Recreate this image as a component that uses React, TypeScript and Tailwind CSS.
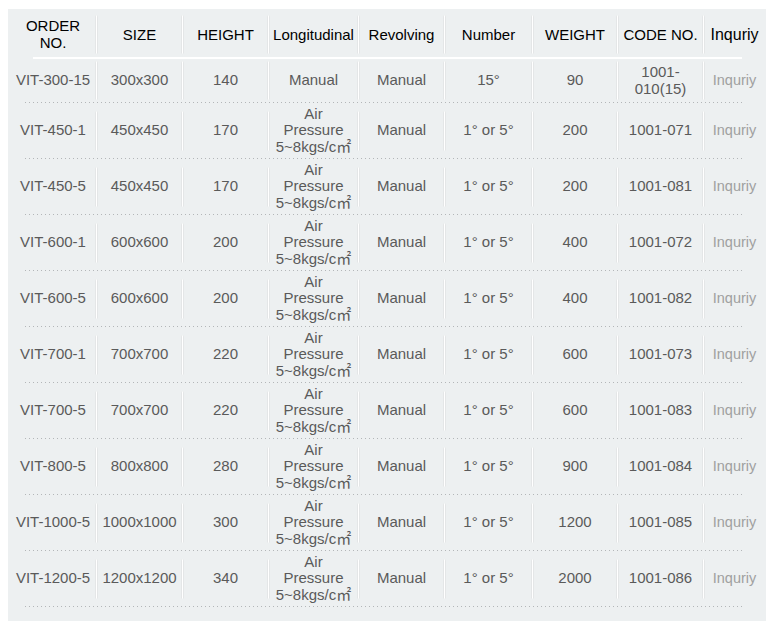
import React from "react";

type Row = {
  order: string;
  size: string;
  height: string;
  air: boolean;
  number: string;
  weight: string;
  code: string;
};

const rows: Row[] = [
  { order: "VIT-300-15", size: "300x300", height: "140", air: false, number: "15°", weight: "90", code: "1001-010(15)" },
  { order: "VIT-450-1", size: "450x450", height: "170", air: true, number: "1° or 5°", weight: "200", code: "1001-071" },
  { order: "VIT-450-5", size: "450x450", height: "170", air: true, number: "1° or 5°", weight: "200", code: "1001-081" },
  { order: "VIT-600-1", size: "600x600", height: "200", air: true, number: "1° or 5°", weight: "400", code: "1001-072" },
  { order: "VIT-600-5", size: "600x600", height: "200", air: true, number: "1° or 5°", weight: "400", code: "1001-082" },
  { order: "VIT-700-1", size: "700x700", height: "220", air: true, number: "1° or 5°", weight: "600", code: "1001-073" },
  { order: "VIT-700-5", size: "700x700", height: "220", air: true, number: "1° or 5°", weight: "600", code: "1001-083" },
  { order: "VIT-800-5", size: "800x800", height: "280", air: true, number: "1° or 5°", weight: "900", code: "1001-084" },
  { order: "VIT-1000-5", size: "1000x1000", height: "300", air: true, number: "1° or 5°", weight: "1200", code: "1001-085" },
  { order: "VIT-1200-5", size: "1200x1200", height: "340", air: true, number: "1° or 5°", weight: "2000", code: "1001-086" },
];

const grid =
  "grid grid-cols-[87px_86px_86px_90px_86px_88px_85px_86px_64px]";

// one cell: white divider bar on the left (except first column), text centred
const Cell: React.FC<{ bar?: boolean; barH: string; className?: string; children: React.ReactNode }> = ({
  bar = true,
  barH,
  className = "",
  children,
}) => (
  <div className="flex items-center">
    {bar && <div className={`w-[3px] ${barH} bg-white rounded-sm shrink-0 border-x border-[#e4e6e7]`} />}
    <div className={`flex-1 text-center ${className}`}>{children}</div>
  </div>
);

const Dots = () => (
  <div className="ml-[17px] w-[717px] h-px bg-[repeating-linear-gradient(to_right,#b3b6b8_0_1px,transparent_1px_4px)]" />
);

const headers = ["SIZE", "HEIGHT", "Longitudinal", "Revolving", "Number", "WEIGHT", "CODE NO."];

export default function App() {
  return (
    <div className="bg-white pt-[9px] px-[8px] font-['Liberation_Sans','Noto_Sans_CJK_SC',sans-serif]">
      <div className="bg-[#edf0f1] h-[612px] w-[758px] pt-[2px]">
        {/* Header */}
        <div className={`${grid} h-[46px] text-[15px] leading-[17px] text-black`}>
          <Cell bar={false} barH="h-[39px]" className="pl-[3px]">
            ORDER
            <br />
            NO.
          </Cell>
          {headers.map((h) => (
            <Cell key={h} barH="h-[39px]">
              {h}
            </Cell>
          ))}
          <Cell barH="h-[39px]" className="text-[16px] pr-[2px]">
            Inquriy
          </Cell>
        </div>
        <div className="ml-[25px] w-[709px] h-[2px] bg-white" />

        {/* Body */}
        {rows.map((r, i) => {
          const barH = i === 0 ? "h-[39px]" : "h-[40px]";
          return (
            <div key={r.order}>
              <div
                className={`${grid} ${i === 0 ? "h-[43px]" : "h-[55px]"} text-[15px] leading-[16.5px] text-[#5a5a5a]`}
              >
                <Cell bar={false} barH={barH} className="pl-[3px]">
                  {r.order}
                </Cell>
                <Cell barH={barH}>{r.size}</Cell>
                <Cell barH={barH}>{r.height}</Cell>
                <Cell barH={barH}>
                  {r.air ? (
                    <>
                      Air
                      <br />
                      Pressure
                      <br />
                      5~8kgs/c㎡
                    </>
                  ) : (
                    "Manual"
                  )}
                </Cell>
                <Cell barH={barH}>Manual</Cell>
                <Cell barH={barH}>{r.number}</Cell>
                <Cell barH={barH}>{r.weight}</Cell>
                <Cell barH={barH}>
                  {r.code === "1001-010(15)" ? (
                    <>
                      1001-
                      <br />
                      010(15)
                    </>
                  ) : (
                    r.code
                  )}
                </Cell>
                <Cell barH={barH} className="text-[14.5px] text-[#a0a0a0] pr-[2px]">
                  Inquriy
                </Cell>
              </div>
              <Dots />
            </div>
          );
        })}
      </div>
    </div>
  );
}
